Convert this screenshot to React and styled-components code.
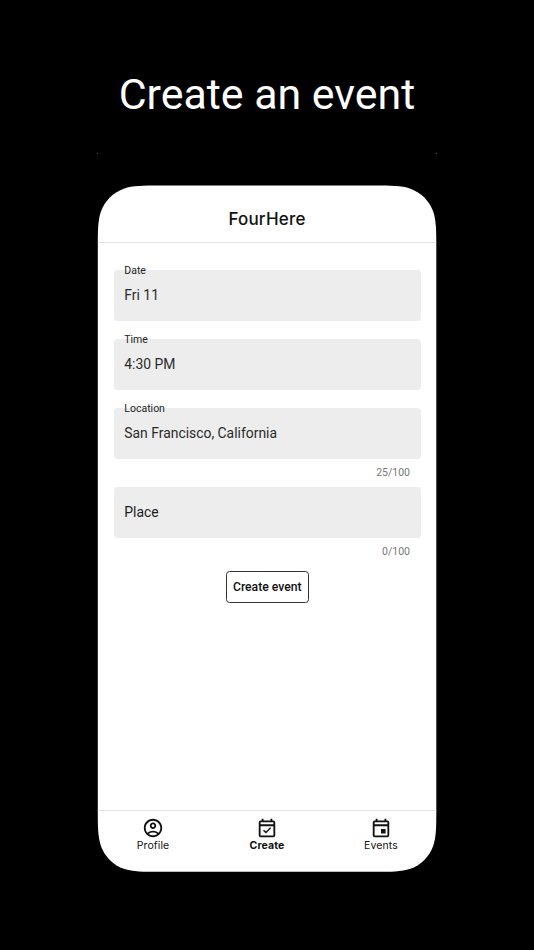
import styled, { createGlobalStyle } from 'styled-components';
import { MdOutlineAccountCircle } from 'react-icons/md';

const fields = [
  { label: 'Date', value: 'Fri 11' },
  { label: 'Time', value: '4:30 PM' },
  { label: 'Location', value: 'San Francisco, California', counter: '25/100' },
  { placeholder: 'Place', counter: '0/100' },
];

const tabs = [
  { name: 'Profile', icon: <MdOutlineAccountCircle /> },
  {
    name: 'Create',
    icon: (
      <CalendarIcon>
        <path d="M8.2 14.4l2.6 2.5 5.2-5.2" strokeWidth="1.5" />
      </CalendarIcon>
    ),
    active: true,
  },
  {
    name: 'Events',
    icon: (
      <CalendarIcon>
        <path d="M12 13h5v5h-5z" fill="currentColor" stroke="none" />
      </CalendarIcon>
    ),
  },
];

function CalendarIcon({ children }) {
  return (
    <svg viewBox="0 0 24 24" fill="none" stroke="currentColor" strokeWidth="2">
      <rect x="4" y="4.7" width="16" height="16.5" rx="1.2" />
      <path d="M4 9h16" />
      <path d="M7.2 2v3M16.8 2v3" />
      {children}
    </svg>
  );
}

function Field({ label, value, placeholder, counter }) {
  return (
    <FieldItem>
      <FieldBox>
        {label && <FieldLabel>{label}</FieldLabel>}
        {value ? <FieldValue>{value}</FieldValue> : <Placeholder>{placeholder}</Placeholder>}
      </FieldBox>
      {counter && <Counter>{counter}</Counter>}
    </FieldItem>
  );
}

function App() {
  return (
    <Page>
      <GlobalStyle />
      <Title>Create an event</Title>
      <Marks>
        <i />
        <i />
      </Marks>
      <Phone>
        <Header>FourHere</Header>
        <Form>
          {fields.map((field) => (
            <Field key={field.label || field.placeholder} {...field} />
          ))}
          <SubmitButton>Create event</SubmitButton>
        </Form>
        <TabBar>
          {tabs.map(({ name, icon, active }) => (
            <Tab key={name} $active={active}>
              {icon}
              <span>{name}</span>
            </Tab>
          ))}
        </TabBar>
      </Phone>
    </Page>
  );
}

const GlobalStyle = createGlobalStyle`
  * {
    box-sizing: border-box;
  }

  body {
    margin: 0;
    background-color: #000;
    font-family: Roboto, sans-serif;
  }
`;

const Page = styled.div`
  display: flex;
  flex-direction: column;
  align-items: center;
  height: 950px;
  overflow: hidden;
  background-color: #000;
`;

const Title = styled.h1`
  margin: 68px 0 0;
  color: #fff;
  font-size: 42.9px;
  font-weight: 400;
  line-height: 52px;
  white-space: nowrap;
`;

const Marks = styled.div`
  display: flex;
  justify-content: space-between;
  width: 340px;
  height: 1px;
  margin-top: 33px;

  i {
    width: 1px;
    height: 1px;
    background-color: #444;
  }
`;

// continuous corners, a plain border-radius is too tight at the ends
const Phone = styled.main`
  display: flex;
  flex-direction: column;
  width: 340px;
  height: 687px;
  margin-top: 31px;
  background-color: #fff;
  clip-path: path(
    'M63.4 0.6 H276.7 C294.7 0.6 303.7 0.6 313.4 3.7 C324 7.5 332.4 15.9 336.2 26.5 C339.3 36.2 339.3 45.2 339.3 63.2 V624.2 C339.3 642.2 339.3 651.2 336.2 660.9 C332.4 671.5 324 679.9 313.4 683.7 C303.7 686.8 294.7 686.8 276.7 686.8 H63.4 C45.4 686.8 36.4 686.8 26.7 683.7 C16.1 679.9 7.7 671.5 3.9 660.9 C0.8 651.2 0.8 642.2 0.8 624.2 V63.2 C0.8 45.2 0.8 36.2 3.9 26.5 C7.7 15.9 16.1 7.5 26.7 3.7 C36.4 0.6 45.4 0.6 63.4 0.6 Z'
  );
`;

const Header = styled.header`
  height: 58px;
  padding-top: 22px;
  border-bottom: 1px solid #e2e2e2;
  color: #111;
  font-family: Inter, sans-serif;
  font-size: 17px;
  font-weight: 500;
  letter-spacing: 0.2px;
  line-height: 24px;
  text-align: center;
`;

const Form = styled.form`
  display: flex;
  flex: 1;
  flex-direction: column;
  align-items: center;
  padding: 27px 16.5px 0 17px;
`;

const FieldItem = styled.div`
  width: 100%;
  margin-bottom: 17.6px;

  &:nth-child(3) {
    margin-bottom: 2px;
  }

  &:nth-child(4) {
    margin-bottom: 7px;
  }
`;

const FieldBox = styled.div`
  display: flex;
  flex-direction: column;
  height: 51.2px;
  padding-left: 10.3px;
  border-radius: 3.5px;
  background-color: #ededed;
`;

const FieldLabel = styled.label`
  height: 12px;
  margin-top: -5px;
  color: #222;
  font-size: 10.5px;
  line-height: 12px;
`;

const FieldValue = styled.span`
  margin-top: 8px;
  color: #2b2b2b;
  font-size: 13.9px;
  line-height: 20px;
`;

const Placeholder = styled(FieldValue)`
  margin-top: 15px;
  color: #1c1c1c;
`;

const Counter = styled.div`
  height: 26px;
  padding-right: 10.5px;
  color: #777;
  font-size: 10.5px;
  line-height: 27.5px;
  text-align: right;
`;

const SubmitButton = styled.button`
  width: 83px;
  height: 32px;
  padding: 0;
  border: 1px solid #333;
  border-radius: 3.5px;
  background-color: #fff;
  color: #111;
  font-family: inherit;
  font-size: 12.2px;
  font-weight: 500;
  white-space: nowrap;
`;

const TabBar = styled.nav`
  display: flex;
  justify-content: center;
  height: 62px;
  border-top: 1px solid #e2e2e2;
`;

const Tab = styled.div`
  display: flex;
  flex: 0 0 114px;
  flex-direction: column;
  align-items: center;
  padding-top: 6px;
  color: #111;
  font-family: Inter, sans-serif;
  font-size: 10.5px;
  font-weight: ${({ $active }) => ($active ? 700 : 400)};
  letter-spacing: 0.1px;
  line-height: 13px;

  svg {
    width: 22px;
    height: 22px;
  }
`;

export default App;
